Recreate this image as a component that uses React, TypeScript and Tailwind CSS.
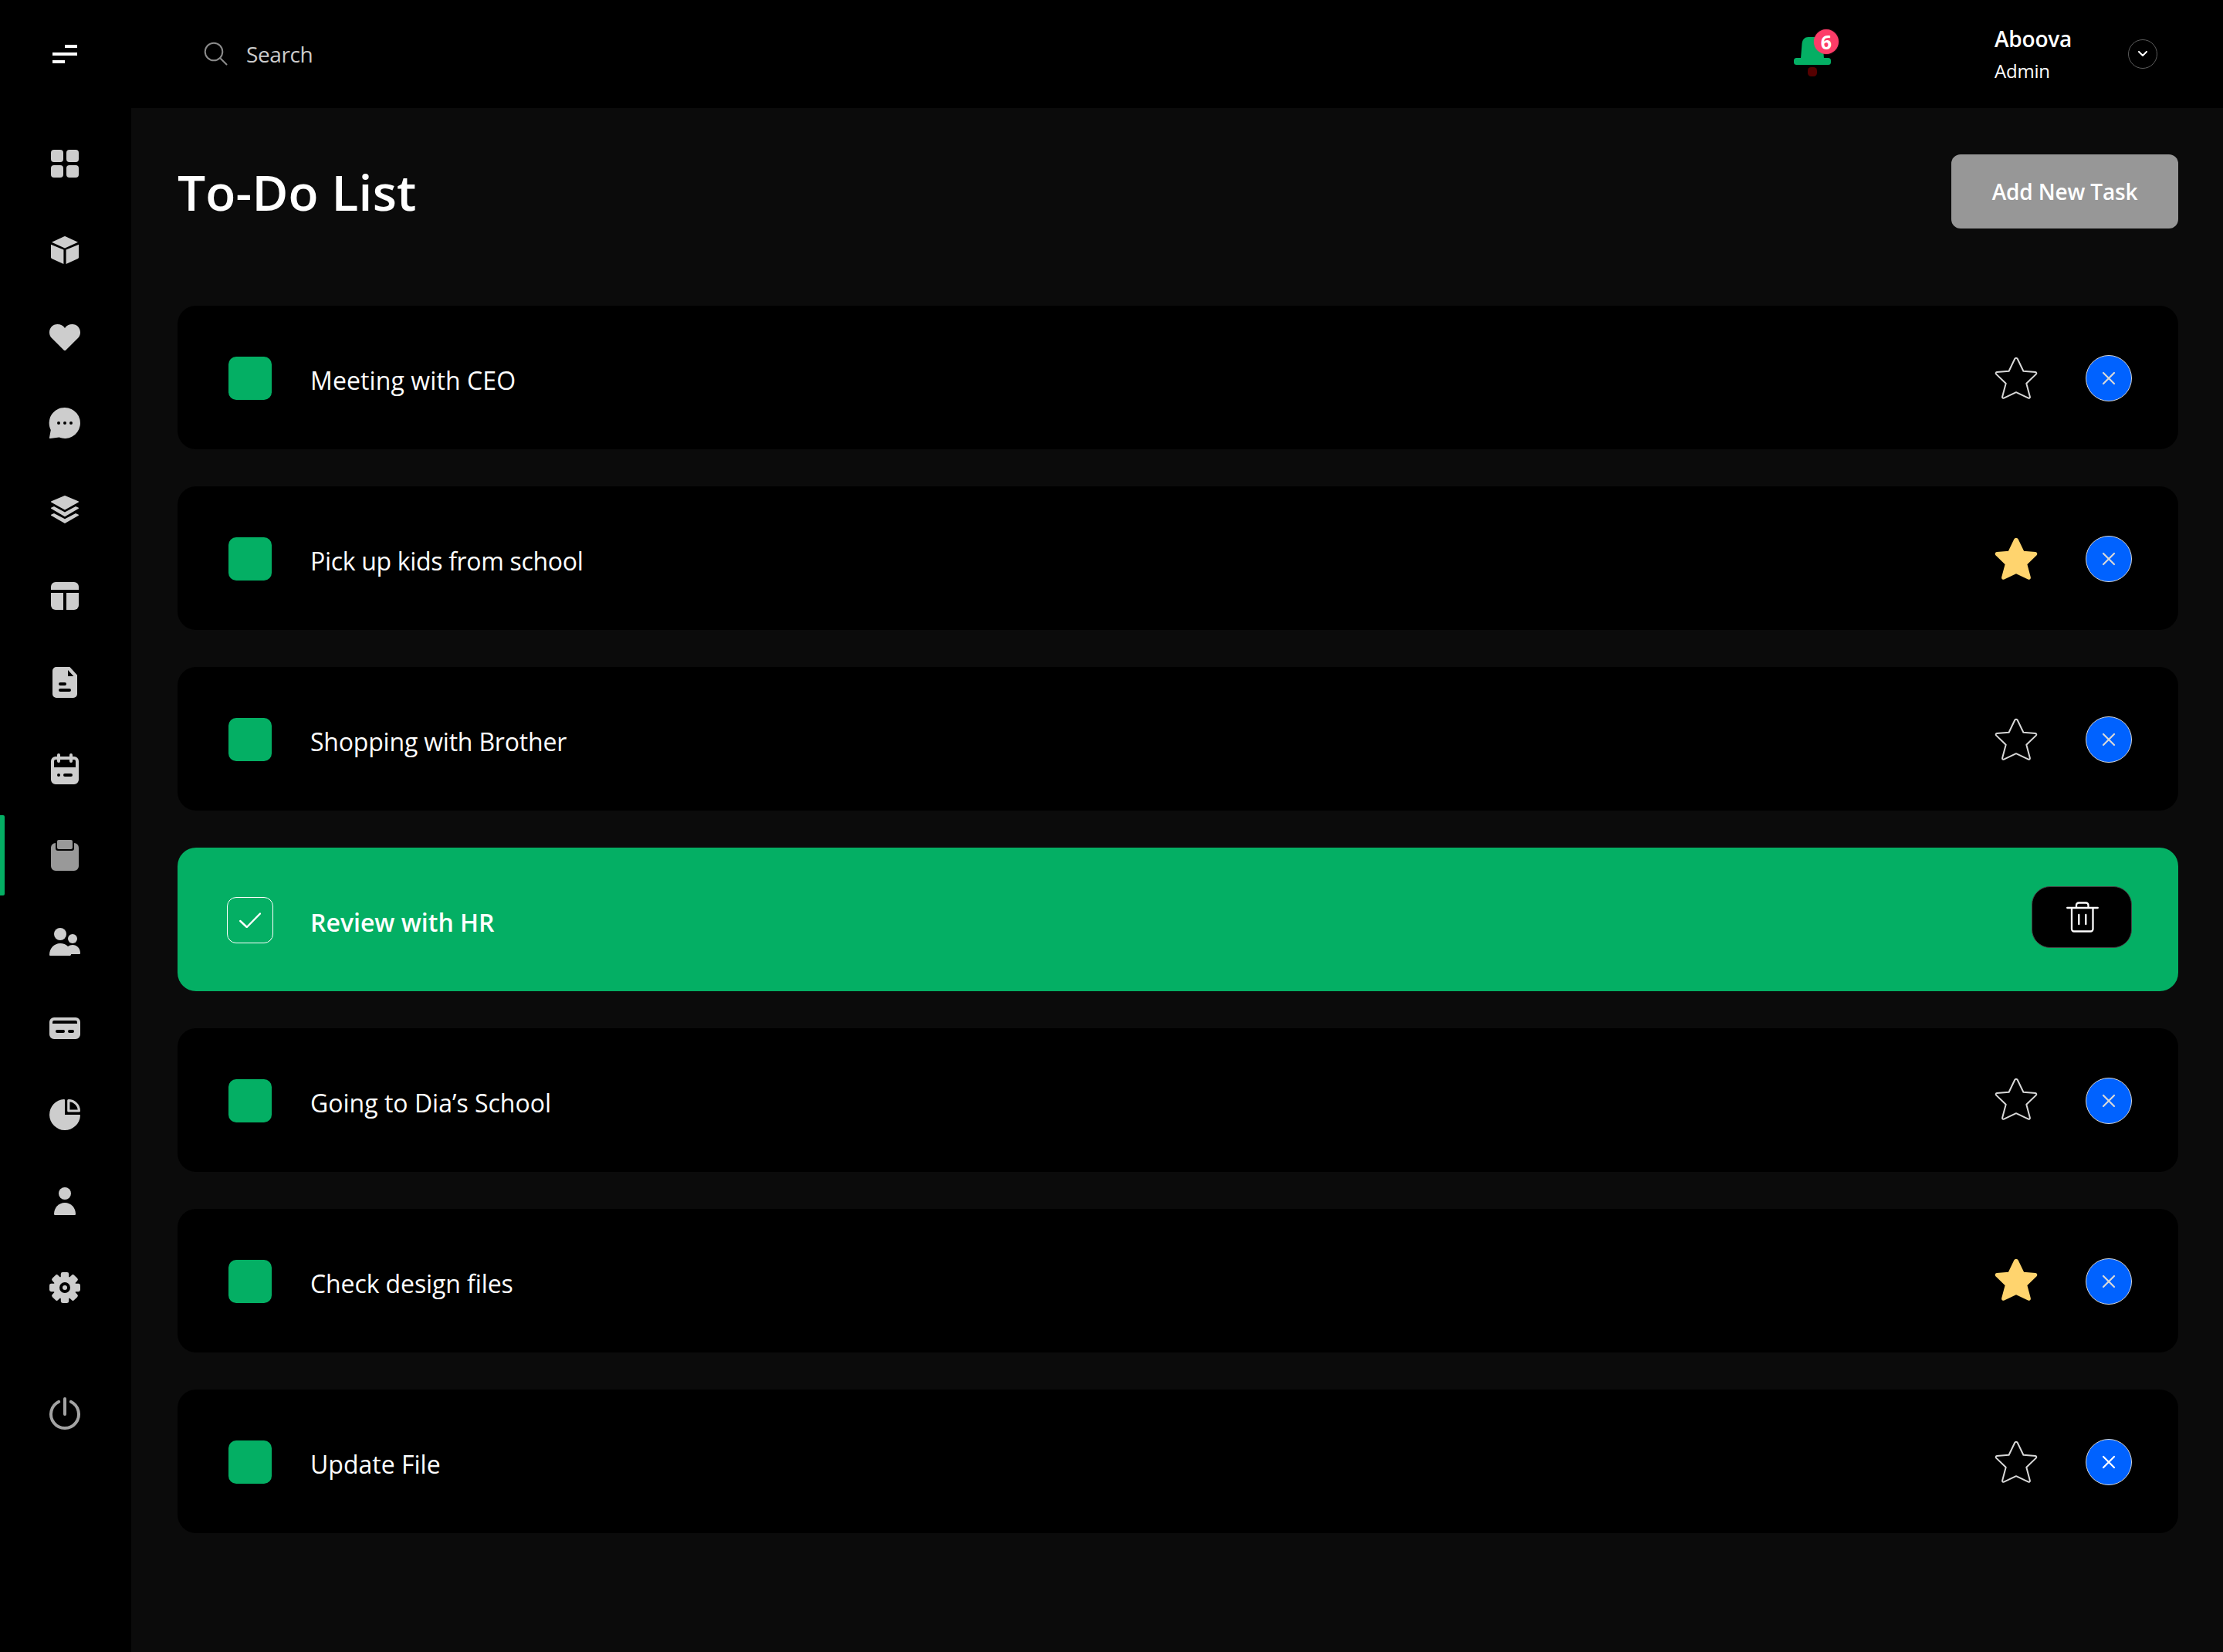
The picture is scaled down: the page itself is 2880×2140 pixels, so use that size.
import React from 'react';
import clsx from 'clsx';

const tasks = [
  { title: 'Meeting with CEO', tracking: 'tracking-[0.1px]' },
  { title: 'Pick up kids from school', starred: true, tracking: 'tracking-[-0.32px]' },
  { title: 'Shopping with Brother', tracking: 'tracking-[-0.2px]' },
  { title: 'Review with HR', done: true },
  { title: 'Going to Dia’s School', starClass: '-mt-1' },
  { title: 'Check design files', starred: true, starClass: '-mt-1', tracking: 'tracking-[-0.1px]' },
  { title: 'Update File', closeClass: 'text-white' },
];

const navIcons = [
  {
    name: 'dashboard',
    icon: <>
      <rect x="3" y="3" width="8" height="8" rx="2" />
      <rect x="13" y="3" width="8" height="8" rx="2" />
      <rect x="3" y="13" width="8" height="8" rx="2" />
      <rect x="13" y="13" width="8" height="8" rx="2" />
    </>,
  },
  {
    name: 'products',
    icon: <>
      <path d="M11.6 3.1a1 1 0 0 1 .8 0l8.1 3.75L12 10.7 3.5 6.85z" />
      <path d="M3 8.4l8.2 3.4V21l-7.7-3.5a.8.8 0 0 1-.5-.7z" />
      <path d="M21 8.4l-8.2 3.4V21l7.7-3.5a.8.8 0 0 0 .5-.7z" />
    </>,
  },
  {
    name: 'favorites',
    icon: <path d="M12 6.5C10.9 4.9 9.2 4 7.2 4 4.2 4 2 6.4 2 9.3c0 1.5.5 2.7 1.4 3.6l7.9 7.8a1 1 0 0 0 1.4 0l7.9-7.8c.9-.9 1.4-2.1 1.4-3.6C22 6.4 19.8 4 16.8 4c-2 0-3.7.9-4.8 2.5z" />,
  },
  {
    name: 'messages',
    icon: <path fillRule="evenodd" d="M12 2a10 10 0 1 1-3.7 19.3L2.5 22a.45.45 0 0 1-.5-.6l.9-4.9A10 10 0 0 1 12 2zM8 11a1 1 0 1 0 0 2 1 1 0 0 0 0-2zm4 0a1 1 0 1 0 0 2 1 1 0 0 0 0-2zm4 0a1 1 0 1 0 0 2 1 1 0 0 0 0-2z" />,
  },
  {
    name: 'stock',
    icon: <>
      <path d="M11.6 3.1a1 1 0 0 1 .8 0l8.3 3.5c.4.2.4.6 0 .8L12 12.2 3.3 7.4c-.4-.2-.4-.6 0-.8z" />
      <path d="M5 10l7 3.7L19 10l1.7.7c.4.2.4.6 0 .8L12 16.6 3.3 11.5c-.4-.2-.4-.6 0-.8z" />
      <path d="M5 14.5l7 3.6 7-3.6 1.7.7c.4.2.4.6 0 .8L12 21l-8.7-5c-.4-.2-.4-.6 0-.8z" />
    </>,
  },
  {
    name: 'pages',
    icon: <>
      <path d="M6 3h12a3 3 0 0 1 3 3v2H3V6a3 3 0 0 1 3-3z" />
      <path d="M3 10h8v11H6a3 3 0 0 1-3-3z" />
      <path d="M13 10h8v8a3 3 0 0 1-3 3h-5z" />
    </>,
  },
  {
    name: 'files',
    icon: <path fillRule="evenodd" d="M6.5 2H15.2l4.8 5.2V19.5a2.5 2.5 0 0 1-2.5 2.5h-11A2.5 2.5 0 0 1 4 19.5v-15A2.5 2.5 0 0 1 6.5 2zM14 4v4h3.7zM9 12a1 1 0 0 0 0 2h3a1 1 0 0 0 0-2zm0 4a1 1 0 0 0 0 2h6a1 1 0 0 0 0-2z" />,
  },
  {
    name: 'calendar',
    icon: <>
      <path fillRule="evenodd" d="M6 4h12a3 3 0 0 1 3 3v12a3 3 0 0 1-3 3H6a3 3 0 0 1-3-3V7a3 3 0 0 1 3-3zm0 2a1 1 0 0 0-1 1v4h14V7a1 1 0 0 0-1-1zm2 9a1 1 0 1 0 0 2 1 1 0 0 0 0-2zm4 0a1 1 0 0 0 0 2h4a1 1 0 0 0 0-2z" />
      <rect x="7" y="2" width="2" height="6" rx="1" />
      <rect x="15" y="2" width="2" height="6" rx="1" />
    </>,
  },
  {
    name: 'todo',
    active: true,
    icon: <>
      <path d="M6 4v3.5A1.5 1.5 0 0 0 7.5 9h9A1.5 1.5 0 0 0 18 7.5V4a3 3 0 0 1 3 3v12a3 3 0 0 1-3 3H6a3 3 0 0 1-3-3V7a3 3 0 0 1 3-3z" />
      <rect x="7" y="2" width="10" height="6" rx="1" />
    </>,
  },
  {
    name: 'contacts',
    icon: <>
      <circle cx="9" cy="7" r="4" />
      <circle cx="17" cy="10" r="3" />
      <path d="M2.5 21a.5.5 0 0 1-.5-.5C2 16.2 5.1 13 9 13c2 0 3.8.8 5 2 .9-.6 1.9-1 3-1 2.8 0 5 2.3 5 5.2v.3a.5.5 0 0 1-.5.5h-5.4c-.1.6-.3 1-.8 1z" />
    </>,
  },
  {
    name: 'invoice',
    icon: <path fillRule="evenodd" d="M5 5h14a3 3 0 0 1 3 3v8a3 3 0 0 1-3 3H5a3 3 0 0 1-3-3V8a3 3 0 0 1 3-3zm0 2a1 1 0 0 0-1 1v1h16V8a1 1 0 0 0-1-1zm2 6a1 1 0 0 0 0 2h4a1 1 0 0 0 0-2zm8 0a1 1 0 0 0 0 2h2a1 1 0 0 0 0-2z" />,
  },
  {
    name: 'charts',
    icon: <>
      <path d="M11.5 2a.5.5 0 0 1 .5.5V11.7a.3.3 0 0 0 .3.3h9.2a.5.5 0 0 1 .5.5A10 10 0 1 1 11.5 2z" />
      <path d="M14.4 2.8c3.8 0 6.8 3 6.8 6.7h-6.8z" fill="none" stroke="currentColor" strokeWidth="1.6" strokeLinejoin="round" />
    </>,
  },
  {
    name: 'team',
    icon: <>
      <circle cx="12" cy="7" r="4" />
      <path d="M5.6 21a.6.6 0 0 1-.6-.6C5 16.2 8 13 12 13s7 3.2 7 7.4a.6.6 0 0 1-.6.6z" />
    </>,
  },
  {
    name: 'settings',
    icon: <>
      <path fillRule="evenodd" d="M12 4.6a7.4 7.4 0 1 1 0 14.8 7.4 7.4 0 0 1 0-14.8zm0 3.9a3.5 3.5 0 1 0 0 7 3.5 3.5 0 0 0 0-7z" />
      {[0, 45, 90, 135, 180, 225, 270, 315].map(angle => <rect key={angle} x="9.4" y="2" width="5.2" height="5" rx="1.2" transform={`rotate(${angle} 12 12)`} />)}
      <circle cx="12" cy="12" r="1.5" />
    </>,
  },
];

function Sidebar() {
  return <nav className="w-[170px] shrink-0 pt-4 text-[#cdcdcd]">
      {navIcons.map(item => <a key={item.name} className={clsx('relative flex h-28 items-center pl-[60px]', item.active && 'text-[#999999]')}>
          {item.active && <span className="absolute left-0 h-[104px] w-1.5 rounded-r-[2px] bg-[#04af64]" />}
          <svg viewBox="0 0 24 24" className="size-12" fill="currentColor">{item.icon}</svg>
        </a>)}
      <a className="mt-[52px] flex h-28 items-center pl-[60px] text-[#a3a3a3]">
        <svg viewBox="0 0 24 24" className="size-12" fill="none" stroke="currentColor" strokeWidth="2" strokeLinecap="round">
          <path d="M8.1 3.9a9 9 0 1 0 7.8 0M12 2v10" />
        </svg>
      </a>
    </nav>;
}

function Header() {
  return <header className="flex h-[140px] items-center">
      <svg viewBox="0 0 32 24" className="ml-[68px] h-6 w-8" fill="#ffffff">
        <path d="M16 0h16v4H16zM0 10h32v4H0zM0 20h16v4H0z" />
      </svg>
      <svg viewBox="0 0 32 32" className="ml-[164px] size-8" fill="none" stroke="#8c8c8c" strokeWidth="2" strokeLinecap="round">
        <circle cx="13" cy="13" r="11.3" />
        <path d="M21.2 21.2l8.3 8.3" />
      </svg>
      <span className="ml-[23px] text-[28px] leading-[38px] tracking-[-0.4px] text-[#cccccc]">Search</span>
      <div className="relative ml-auto h-[64px] w-[60px]">
        <svg viewBox="0 0 60 64" className="h-[64px] w-[60px]">
          <path d="M12.5 19c.4-6 4-9 8-9h11c4 0 7.6 3 8 9l1.5 18.5H11z" fill="#04af64" />
          <rect x="2" y="37" width="48" height="9" rx="3.5" fill="#04af64" />
          <rect x="20" y="49" width="12" height="12" rx="4.5" fill="#550000" />
        </svg>
        <span className="absolute left-[28px] top-0 flex size-8 items-center justify-center rounded-full bg-[#fd3c68] text-[25px] font-bold leading-none text-white shadow-[0_0_2px_#fd3c6880]">6</span>
      </div>
      <div className="ml-[202px] w-[173px] pt-0.5 text-white">
        <p className="text-[28px] font-semibold leading-[38px] tracking-[-0.2px]">Aboova</p>
        <p className="mt-1 text-2xl leading-[38px] tracking-[-0.2px]">Admin</p>
      </div>
      <button className="mr-[85px] flex size-[38px] items-center justify-center rounded-full border border-[#5c5c5c]">
        <svg viewBox="0 0 12 8" className="h-2 w-3" fill="none" stroke="#ffffff" strokeWidth="2" strokeLinecap="round" strokeLinejoin="round">
          <path d="M1 1l5 5 5-5" />
        </svg>
      </button>
    </header>;
}

function Star({ filled, className }: { filled?: boolean; className?: string }) {
  return <svg viewBox="0 0 56 56" className={clsx('size-14', filled ? 'text-[#ffd46e]' : 'text-[#d8d8d8]', className)} fill={filled ? 'currentColor' : 'none'} stroke="currentColor" strokeWidth="2" strokeLinejoin="round">
      <path d="M26.3 2.8a1.9 1.9 0 0 1 3.4 0l7.7 16 15.6 1.3c1.3.1 1.7 1.6.9 2.5L41.3 34.8l4.6 17.2c.3 1.2-.9 2.1-2.1 1.6L28 46.2l-15.8 7.4c-1.2.5-2.4-.4-2.1-1.6L14.7 34.8 2.1 22.6c-.8-.9-.4-2.4.9-2.5l15.6-1.3z" />
    </svg>;
}

type Task = {
  title: string;
  starred?: boolean;
  done?: boolean;
  tracking?: string;
  starClass?: string;
  closeClass?: string;
};

function TaskRow({ title, starred, done, tracking, starClass, closeClass = 'text-[#d8d8d8]' }: Task) {
  if (done) {
    return <li className="flex h-[186px] items-center rounded-3xl bg-[#04af64] pl-16 pr-[60px]">
        <span className="mt-0.5 flex size-[60px] items-center justify-center rounded-xl border border-white">
          <svg viewBox="0 0 28 20" className="h-5 w-7" fill="none" stroke="#ffffff" strokeWidth="2.4" strokeLinecap="round" strokeLinejoin="round">
            <path d="M1.2 11l8.6 8L27 1.5" />
          </svg>
        </span>
        <span className="ml-12 mt-2 text-[32px] font-semibold text-white">{title}</span>
        <button className="-mt-1.5 ml-auto flex h-20 w-[130px] items-center justify-center rounded-3xl border border-[#454545] bg-black pl-0.5">
          <svg viewBox="0 0 42 40" className="h-10 w-[42px]" fill="none" stroke="#ffffff" strokeWidth="2.3" strokeLinecap="round" strokeLinejoin="round">
            <path d="M1.2 8h39.6M7 8v27.5a3 3 0 0 0 3 3h21.5a3 3 0 0 0 3-3V8M13 8V4.5a3 3 0 0 1 3-3h9.5a3 3 0 0 1 3 3V8M16.3 17v12.2M25.3 17v12.2" />
          </svg>
        </button>
      </li>;
  }
  return <li className="flex h-[186px] items-center rounded-3xl bg-black pl-[66px] pr-[60px] pt-0.5">
      <span className="size-14 rounded-[10px] bg-[#04af64]" />
      <span className={clsx('ml-[50px] mt-1.5 text-[32px] font-medium text-white', tracking)}>{title}</span>
      <div className="ml-auto flex items-center gap-[62px]">
        <Star filled={starred} className={starClass} />
        <button className={clsx('flex size-[60px] items-center justify-center rounded-full border border-[#d5d5d5] bg-[#0062ff]', closeClass)}>
          <svg viewBox="0 0 18 18" className="size-[18px]" fill="none" stroke="currentColor" strokeWidth="2.2" strokeLinecap="round">
            <path d="M2 2l14 14M16 2L2 16" />
          </svg>
        </button>
      </div>
    </li>;
}

export default function App() {
  return <div className="flex h-[2140px] w-[2880px] flex-col overflow-hidden bg-black font-['Open_Sans',sans-serif]">
      <Header />
      <div className="flex flex-1">
        <Sidebar />
        <main className="flex-1 bg-[#0b0b0b] pl-[60px] pr-[58px] pt-[60px]">
          <div className="flex h-24 items-center justify-between">
            <h1 className="pt-0.5 text-[64px] font-semibold leading-none tracking-[0.2px] text-white">To-Do List</h1>
            <button className="h-24 w-[294px] rounded-xl bg-[#979797] text-[28px] font-semibold tracking-[-0.15px] text-white">Add New Task</button>
          </div>
          <ul className="mt-[100px] flex flex-col gap-12">
            {tasks.map(task => <TaskRow key={task.title} {...task} />)}
          </ul>
        </main>
      </div>
    </div>;
}
